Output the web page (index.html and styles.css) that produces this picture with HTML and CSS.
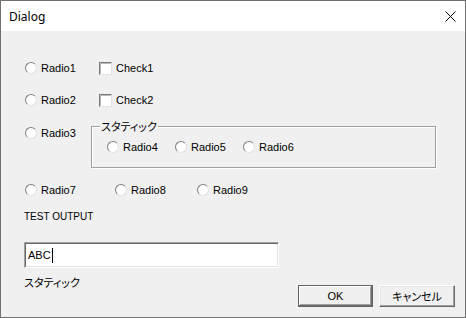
FILE: index.html
```html
<!DOCTYPE html>
<html lang="ja">
<head>
    <meta charset="UTF-8">
    <title>Dialog</title>
    <link rel="stylesheet" href="styles.css">
</head>
<body>
    <div class="window">
        <div class="titlebar">
            <span class="title">Dialog</span>
            <span class="close">
                <svg width="11" height="11" viewBox="0 0 11 11">
                    <path d="M0.5 0.5 L10.5 10.5 M10.5 0.5 L0.5 10.5" stroke="#000" stroke-width="1" fill="none"/>
                </svg>
            </span>
        </div>
        <div class="client">
            <div class="row row1">
                <label class="radio w74"><span class="circle"></span>Radio1</label>
                <label class="check"><span class="box"></span>Check1</label>
            </div>
            <div class="row row2">
                <label class="radio w74"><span class="circle"></span>Radio2</label>
                <label class="check"><span class="box"></span>Check2</label>
            </div>
            <div class="row row3">
                <label class="radio w66"><span class="circle"></span>Radio3</label>
                <div class="group">
                    <span class="group-label jp">スタティック</span>
                    <label class="radio w68"><span class="circle"></span>Radio4</label>
                    <label class="radio w68"><span class="circle"></span>Radio5</label>
                    <label class="radio w68"><span class="circle"></span>Radio6</label>
                </div>
            </div>
            <div class="row row7">
                <label class="radio w90"><span class="circle"></span>Radio7</label>
                <label class="radio w82"><span class="circle"></span>Radio8</label>
                <label class="radio"><span class="circle"></span>Radio9</label>
            </div>
            <div class="test-output">TEST OUTPUT</div>
            <div class="edit">ABC<span class="caret"></span></div>
            <div class="bottom">
                <span class="static jp">スタティック</span>
                <div class="buttons">
                    <button class="btn default">OK</button>
                    <button class="btn jp">キャンセル</button>
                </div>
            </div>
        </div>
    </div>
</body>
</html>
```

FILE: styles.css
```css
body {
    margin: 0;
    background-color: #f0f0f0;
}
.window {
    width: 466px;
    height: 318px;
    box-sizing: border-box;
    border: 1px solid #717171;
    background-color: #f0f0f0;
    display: flex;
    flex-direction: column;
}
.titlebar {
    height: 30px;
    background-color: #fff;
    display: flex;
    align-items: center;
    justify-content: space-between;
    padding: 0 9px 0 8px;
}
.title {
    font-family: "Noto Sans", sans-serif;
    font-size: 12px;
    color: #000;
}
.close {
    display: flex;
}
.client {
    flex: 1;
    padding: 29px 10px 0 23px;
    display: flex;
    flex-direction: column;
    font-family: "Liberation Sans", Arial, sans-serif;
    font-size: 11px;
    color: #000;
}
.jp {
    font-family: "Noto Sans CJK JP", sans-serif;
    font-feature-settings: "palt";
}
.row {
    display: flex;
    align-items: center;
    margin-left: 1px;
}
.row2 {
    margin-top: 16px;
}
.row3 {
    margin-top: 17px;
    align-items: flex-start;
}
.row7 {
    margin-top: 14px;
}
.radio, .check {
    display: flex;
    align-items: center;
    height: 16px;
    gap: 4px;
}
.w66 { width: 66px; }
.w68 { width: 68px; }
.w74 { width: 74px; }
.w82 { width: 82px; }
.w90 { width: 90px; }
.circle {
    width: 12px;
    height: 12px;
    box-sizing: border-box;
    border-radius: 50%;
    border: 1px solid;
    border-color: #7d7d7d #e2e2e2 #e2e2e2 #7d7d7d;
    background-color: #fff;
}
.box {
    width: 13px;
    height: 13px;
    box-sizing: border-box;
    border: 1px solid;
    border-color: #7d7d7d #e2e2e2 #e2e2e2 #7d7d7d;
    box-shadow: inset 1px 1px 0 #b9b9b9;
    background-color: #fff;
}
.group {
    position: relative;
    margin-top: 1px;
    width: 345px;
    height: 42px;
    box-sizing: border-box;
    border: 1px solid #a0a0a0;
    box-shadow: 1px 1px 0 #fff, inset 1px 1px 0 #fff;
    display: flex;
    align-items: center;
    padding: 0 0 0 15px;
}
.group-label {
    position: absolute;
    left: 8px;
    top: -9px;
    padding: 0 1px;
    font-size: 11px;
    line-height: 16px;
    background-color: #f0f0f0;
}
.test-output {
    margin-top: 11px;
    height: 16px;
    line-height: 16px;
    font-size: 10px;
}
.edit {
    margin-top: 17px;
    width: 255px;
    height: 26px;
    box-sizing: border-box;
    border: 1px solid;
    border-color: #a0a0a0 #fff #fff #a0a0a0;
    box-shadow: inset 1px 1px 0 #696969, inset -1px -1px 0 #e3e3e3;
    background-color: #fff;
    display: flex;
    align-items: center;
    padding-left: 3px;
}
.caret {
    width: 1px;
    height: 15px;
    background-color: #000;
    margin-left: 1px;
}
.bottom {
    margin-top: 6px;
    display: flex;
    justify-content: space-between;
    align-items: flex-start;
}
.static {
    font-size: 11px;
    line-height: 16px;
}
.buttons {
    margin-top: 11px;
    display: flex;
    gap: 6px;
}
.btn {
    width: 76px;
    height: 22px;
    box-sizing: border-box;
    margin: 0;
    padding: 0;
    font-family: "Liberation Sans", Arial, sans-serif;
    font-size: 11px;
    color: #000;
    background-color: #f0f0f0;
    border: 1px solid;
    border-color: #fff #696969 #696969 #fff;
    box-shadow: inset -1px -1px 0 #a0a0a0, inset 1px 1px 0 #e3e3e3;
}
.btn.jp {
    font-family: "Noto Sans CJK JP", sans-serif;
}
.btn.default {
    width: 75px;
    border: 1px solid #646464;
    box-shadow: inset -1px -1px 0 #696969, inset 1px 1px 0 #fff, inset -2px -2px 0 #a0a0a0;
}
```
